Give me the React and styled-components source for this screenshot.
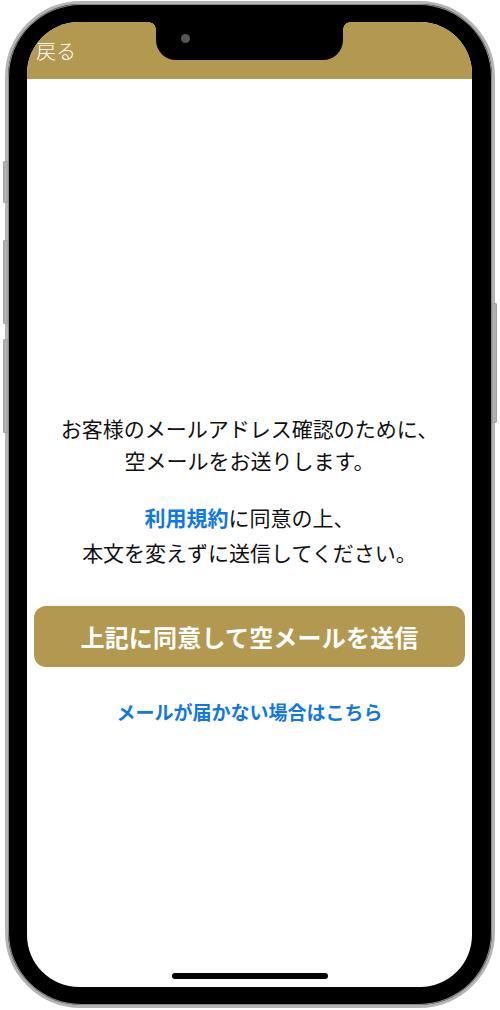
import React from "react";
import styled, { createGlobalStyle } from "styled-components";

const Global = createGlobalStyle`
  html, body { margin: 0; padding: 0; background: #ffffff; }
  body { font-family: "Noto Sans CJK JP", "Noto Sans", sans-serif; }
`;

const GOLD = "#b3984f";
const BLUE = "#0f78e8";

const Stage = styled.div`
  position: relative;
  width: 500px;
  height: 1010px;
  overflow: hidden;
  padding-top: 1px;
  box-sizing: border-box;
`;

const Phone = styled.div`
  position: relative;
  margin-left: 5px;
  width: 490px;
  height: 1007px;
  box-sizing: border-box;
  border: 3px solid #b4b4b4;
  box-shadow: inset 0 0 0 1px #8a8a8a;
  border-radius: 76px;
  background: #000;
  padding: 18px 20px 18px 19px;
  display: flex;
`;

const SideButton = styled.div`
  position: absolute;
  top: ${(p) => p.$top}px;
  height: ${(p) => p.$h}px;
  width: 5px;
  ${(p) => (p.$right ? "right: -5px;" : "left: -5px;")}
  background: #b0b0b0;
  border-radius: ${(p) => (p.$right ? "0 2px 2px 0" : "2px 0 0 2px")};
  box-shadow: inset 0 0 0 1px #a2a2a2;
`;

const Screen = styled.div`
  position: relative;
  flex: 1;
  background: #fff;
  border-radius: 52px;
  overflow: hidden;
  display: flex;
  flex-direction: column;
`;

const Header = styled.div`
  height: 57px;
  background: ${GOLD};
  display: flex;
  align-items: flex-end;
  padding: 0 0 16px 9px;
  box-sizing: border-box;
`;

const Back = styled.span`
  color: #fff;
  font-size: 20px;
  line-height: 24px;
  font-weight: 300;
`;

const Notch = styled.div`
  position: absolute;
  top: 0;
  left: 129px;
  width: 187px;
  height: 38px;
  background: #000;
  border-radius: 0 0 20px 20px;

  &::before,
  &::after {
    content: "";
    position: absolute;
    top: 0;
    width: 7px;
    height: 7px;
  }
  &::before {
    left: -7px;
    background: radial-gradient(circle at 0 100%, transparent 6.5px, #000 7px);
  }
  &::after {
    right: -7px;
    background: radial-gradient(circle at 100% 100%, transparent 6.5px, #000 7px);
  }
`;

const Camera = styled.div`
  position: absolute;
  left: 25px;
  top: 12px;
  width: 9px;
  height: 9px;
  border-radius: 50%;
  background: #555;
`;

const Body = styled.div`
  flex: 1;
  display: flex;
  flex-direction: column;
  align-items: stretch;
  padding: 333px 7px 0 7px;
`;

const Paragraph = styled.p`
  margin: 0 0 ${(p) => p.$mb}px;
  text-align: center;
  font-size: 21px;
  line-height: ${(p) => p.$lh}px;
  color: #111;
  font-weight: 400;
`;

const Terms = styled.span`
  color: ${BLUE};
  font-weight: 700;
`;

const SendButton = styled.button`
  height: 61px;
  width: 100%;
  border: none;
  border-radius: 12px;
  background: ${GOLD};
  color: #fff;
  font-family: inherit;
  font-size: 24px;
  font-weight: 700;
  letter-spacing: 0.2px;
  cursor: pointer;
`;

const HelpLink = styled.a`
  margin-top: 32px;
  text-align: center;
  color: ${BLUE};
  font-size: 19px;
  line-height: 26px;
  font-weight: 700;
  text-decoration: none;
`;

const HomeIndicator = styled.div`
  position: absolute;
  bottom: 8px;
  left: 50%;
  transform: translateX(-50%);
  width: 156px;
  height: 6px;
  border-radius: 3px;
  background: #000;
`;

export default function App() {
  return (
    <>
      <Global />
      <Stage>
        <Phone>
          <SideButton $top={157} $h={42} />
          <SideButton $top={236} $h={84} />
          <SideButton $top={335} $h={94} />
          <SideButton $right $top={299} $h={120} />
          <Screen>
            <Header>
              <Back>戻る</Back>
            </Header>
            <Notch>
              <Camera />
            </Notch>
            <Body>
              <Paragraph $lh={32} $mb={24}>
                お客様のメールアドレス確認のために、
                <br />
                空メールをお送りします。
              </Paragraph>
              <Paragraph $lh={35} $mb={36}>
                <Terms>利用規約</Terms>に同意の上、
                <br />
                本文を変えずに送信してください。
              </Paragraph>
              <SendButton>上記に同意して空メールを送信</SendButton>
              <HelpLink href="#">メールが届かない場合はこちら</HelpLink>
            </Body>
            <HomeIndicator />
          </Screen>
        </Phone>
      </Stage>
    </>
  );
}
